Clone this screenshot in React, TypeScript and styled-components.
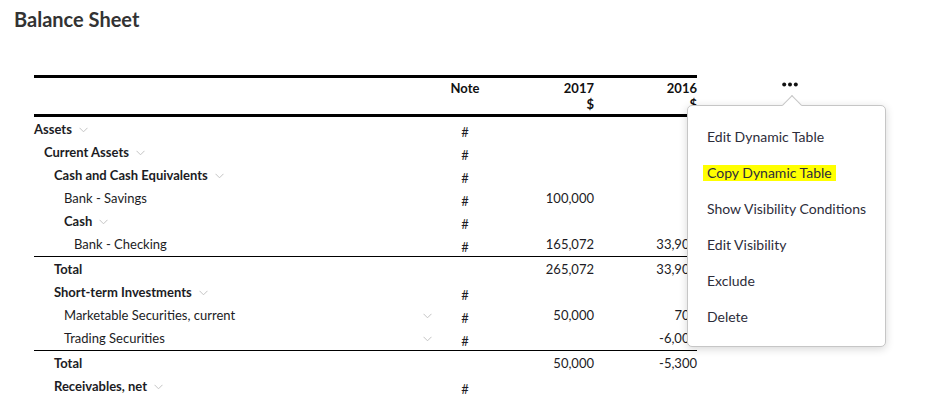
import React from "react";
import styled, { createGlobalStyle } from "styled-components";

const GlobalStyle = createGlobalStyle`
  body {
    margin: 0;
    background: #fff;
    font-family: Lato, "Open Sans", "Liberation Sans", sans-serif;
    color: #222;
  }
`;

const Page = styled.div`
  padding: 7px 0 0 14px;
`;

const Title = styled.h1`
  margin: 0;
  font-size: 20px;
  font-weight: 700;
  line-height: 24px;
  color: #333;
`;

const Workspace = styled.div`
  display: flex;
  margin: 44px 0 0 20px;
`;

const Table = styled.div`
  width: 663px;
  font-size: 13px;
`;

const HeaderRow = styled.div`
  display: grid;
  grid-template-columns: 406px 50px 104px 103px;
  height: 34px;
  border-top: 3px solid #000;
  border-bottom: 3px solid #000;
  padding-top: 2px;
  box-sizing: content-box;
  font-weight: 700;
  line-height: 16px;
  color: #111;
`;

const HeaderCell = styled.div<{ align: "left" | "center" | "right" }>`
  text-align: ${({ align }) => align};
`;

const Row = styled.div<{ total?: boolean }>`
  display: grid;
  grid-template-columns: 406px 50px 104px 103px;
  height: 23px;
  align-items: center;
  border-top: ${({ total }) => (total ? "1px solid #000" : "none")};
  margin-top: ${({ total }) => (total ? "1px" : "0")};
  color: #1c1c24;
`;

const Label = styled.div<{ level: number; bold?: boolean }>`
  display: flex;
  align-items: center;
  padding-left: ${({ level }) => level * 10}px;
  padding-right: 8px;
  font-weight: ${({ bold }) => (bold ? 700 : 400)};
`;

const LabelText = styled.span<{ grow?: boolean }>`
  flex: ${({ grow }) => (grow ? 1 : "none")};
`;

const Chevron = styled.svg<{ gap?: boolean }>`
  width: 9px;
  height: 6px;
  margin-left: ${({ gap }) => (gap ? "7px" : "0")};
  margin-top: 3px;
  flex: none;
`;

const NoteCell = styled.div`
  text-align: center;
  padding-top: 6px;
`;

const Amount = styled.div`
  text-align: right;
`;

const ActionColumn = styled.div`
  position: relative;
  width: 185px;
  display: flex;
  justify-content: center;
  padding-top: 7px;
  align-items: flex-start;
`;

const DotsButton = styled.button`
  border: none;
  background: none;
  padding: 0;
  cursor: pointer;
  display: flex;
`;

const Popup = styled.div`
  position: absolute;
  left: -10px;
  top: 30px;
  width: 178px;
  height: 227px;
  background: #fff;
  border: 1px solid #c6c6c6;
  border-radius: 5px;
  box-shadow: 0 2px 8px rgba(0, 0, 0, 0.16);
  padding: 13px 0 0 19px;
  box-sizing: content-box;
`;

const PopupArrow = styled.div`
  position: absolute;
  top: -8px;
  left: 97px;
  width: 13px;
  height: 13px;
  background: #fff;
  border-top: 1px solid #c6c6c6;
  border-left: 1px solid #c6c6c6;
  transform: rotate(45deg);
`;

const MenuItem = styled.div`
  height: 36px;
  display: flex;
  align-items: center;
  font-size: 14px;
  color: #2d2d3a;
  white-space: nowrap;
`;

const MenuLabel = styled.span<{ highlighted?: boolean }>`
  line-height: 16px;
  padding: 0 4px;
  margin-left: -4px;
  background: ${({ highlighted }) => (highlighted ? "#ffff00" : "transparent")};
`;

type Line = {
  label: string;
  level: number;
  bold?: boolean;
  chevron?: "inline" | "end";
  note?: boolean;
  total?: boolean;
  y2017?: string;
  y2016?: string;
};

const lines: Line[] = [
  { label: "Assets", level: 0, bold: true, chevron: "inline", note: true },
  { label: "Current Assets", level: 1, bold: true, chevron: "inline", note: true },
  { label: "Cash and Cash Equivalents", level: 2, bold: true, chevron: "inline", note: true },
  { label: "Bank - Savings", level: 3, note: true, y2017: "100,000" },
  { label: "Cash", level: 3, bold: true, chevron: "inline", note: true },
  { label: "Bank - Checking", level: 4, note: true, y2017: "165,072", y2016: "33,900" },
  { label: "Total", level: 2, bold: true, total: true, y2017: "265,072", y2016: "33,900" },
  { label: "Short-term Investments", level: 2, bold: true, chevron: "inline", note: true },
  { label: "Marketable Securities, current", level: 3, chevron: "end", note: true, y2017: "50,000", y2016: "700" },
  { label: "Trading Securities", level: 3, chevron: "end", note: true, y2016: "-6,000" },
  { label: "Total", level: 2, bold: true, total: true, y2017: "50,000", y2016: "-5,300" },
  { label: "Receivables, net", level: 2, bold: true, chevron: "inline", note: true },
];

const menuItems = [
  "Edit Dynamic Table",
  "Copy Dynamic Table",
  "Show Visibility Conditions",
  "Edit Visibility",
  "Exclude",
  "Delete",
];

const ChevronIcon = ({ gap }: { gap?: boolean }) => (
  <Chevron gap={gap} viewBox="0 0 9 6">
    <polyline points="0.5,0.8 4.5,4.8 8.5,0.8" fill="none" stroke="#c4c4c4" strokeWidth="1" />
  </Chevron>
);

export default function App() {
  return (
    <Page>
      <GlobalStyle />
      <Title>Balance Sheet</Title>
      <Workspace>
        <Table>
          <HeaderRow>
            <HeaderCell align="left" />
            <HeaderCell align="center">Note</HeaderCell>
            <HeaderCell align="right">
              2017
              <br />$
            </HeaderCell>
            <HeaderCell align="right">
              2016
              <br />$
            </HeaderCell>
          </HeaderRow>
          {lines.map((line, i) => (
            <Row key={i} total={line.total}>
              <Label level={line.level} bold={line.bold}>
                <LabelText grow={line.chevron === "end"}>{line.label}</LabelText>
                {line.chevron === "inline" && <ChevronIcon gap />}
                {line.chevron === "end" && <ChevronIcon />}
              </Label>
              <NoteCell>{line.note ? "#" : ""}</NoteCell>
              <Amount>{line.y2017}</Amount>
              <Amount>{line.y2016}</Amount>
            </Row>
          ))}
        </Table>
        <ActionColumn>
          <DotsButton aria-label="More actions">
            <svg width="16" height="5" viewBox="0 0 16 5">
              <circle cx="2.2" cy="2.5" r="2" fill="#111" />
              <circle cx="8" cy="2.5" r="2" fill="#111" />
              <circle cx="13.8" cy="2.5" r="2" fill="#111" />
            </svg>
          </DotsButton>
          <Popup>
            <PopupArrow />
            {menuItems.map((item) => (
              <MenuItem key={item}>
                <MenuLabel highlighted={item === "Copy Dynamic Table"}>{item}</MenuLabel>
              </MenuItem>
            ))}
          </Popup>
        </ActionColumn>
      </Workspace>
    </Page>
  );
}
